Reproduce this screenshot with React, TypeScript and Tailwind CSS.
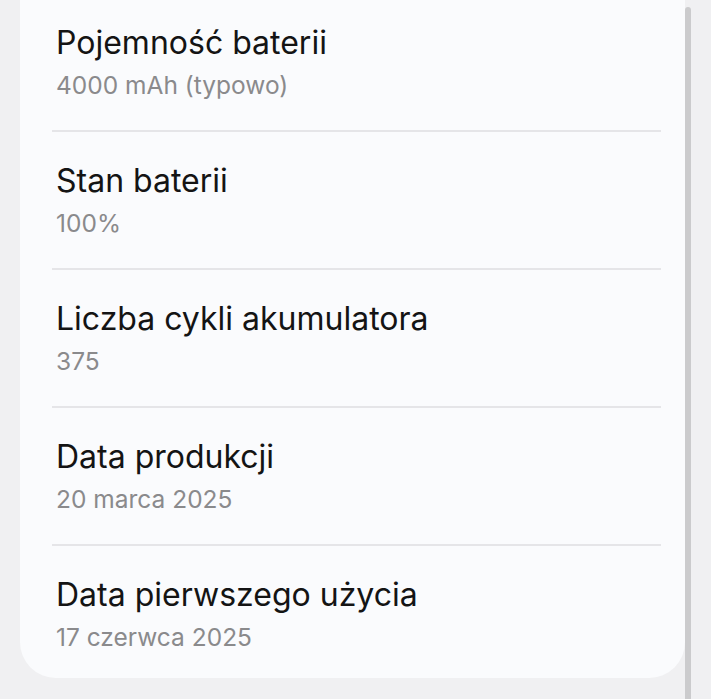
const rows = [
  { title: "Pojemność baterii", value: "4000 mAh (typowo)" },
  { title: "Stan baterii", value: "100%" },
  { title: "Liczba cykli akumulatora", value: "375" },
  { title: "Data produkcji", value: "20 marca 2025" },
  { title: "Data pierwszego użycia", value: "17 czerwca 2025" },
];

export default function App() {
  return (
    <div
      className="relative w-[711px] h-[699px] overflow-hidden bg-[#f0f0f2]"
      style={{ fontFamily: "Inter, 'Noto Sans', sans-serif" }}
    >
      <div className="ml-[20px] w-[665px] bg-[#fafbfd] rounded-b-[36px]">
        {rows.map((row, i) => (
          <div key={row.title}>
            {i > 0 && <div className="ml-[32px] mr-[24px] h-[2px] bg-[#e5e5e8]" />}
            <div
              className={
                "pl-[36px] " +
                (i === 0
                  ? "h-[130px] pt-[24px]"
                  : i === rows.length - 1
                    ? "h-[132px] pt-[30px]"
                    : "h-[136px] pt-[30px]")
              }
            >
              <div className="text-[32px] leading-[38px] text-[#141414]">
                {row.title}
              </div>
              <div className="mt-[8px] text-[24.5px] leading-[30px] text-[#8a8a8c]">
                {row.value}
              </div>
            </div>
          </div>
        ))}
      </div>
      <div className="absolute left-[685px] top-[7px] w-[6px] h-[700px] rounded-t-[3px] bg-[#cbcbcd]" />
    </div>
  );
}
